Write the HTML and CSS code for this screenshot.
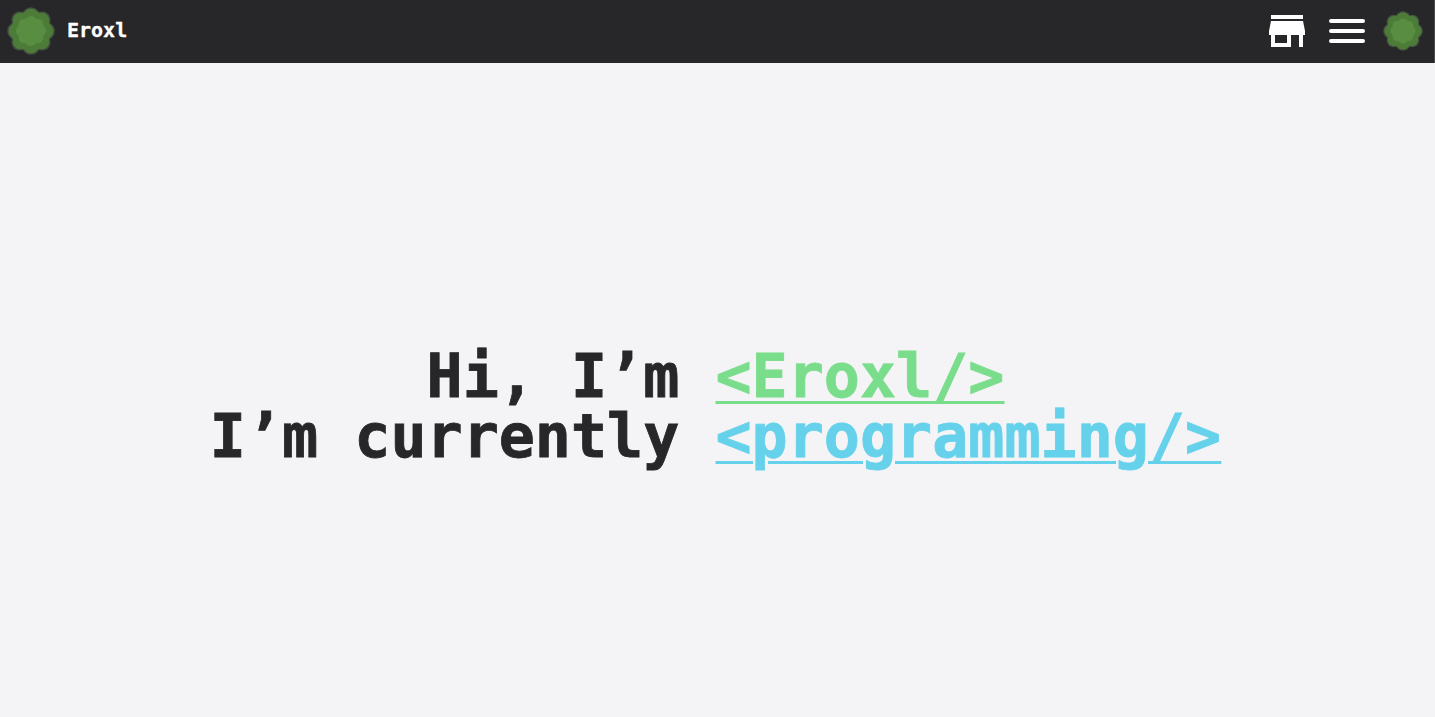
FILE: index.html
```
<!DOCTYPE html>
<html lang="en">
<head>
<meta charset="utf-8">
<title>Eroxl</title>
<link rel="stylesheet" href="styles.css">
</head>
<body>
<svg class="defs" aria-hidden="true">
  <symbol id="bush" viewBox="-24 -24 48 48">
    <g fill="#435140">
      <circle r="21"/><circle cy="-15" r="8.8"/><circle cy="15" r="8.8"/><circle cx="-15" r="8.8"/><circle cx="15" r="8.8"/>
      <circle cx="11.2" cy="-11.2" r="8.4"/><circle cx="11.2" cy="11.2" r="8.4"/><circle cx="-11.2" cy="-11.2" r="8.4"/><circle cx="-11.2" cy="11.2" r="8.4"/>
    </g>
    <g fill="#4d7c38">
      <circle r="19.8"/><circle cy="-14.5" r="7.8"/><circle cy="14.5" r="7.8"/><circle cx="-14.5" r="7.8"/><circle cx="14.5" r="7.8"/>
      <circle cx="10.8" cy="-10.8" r="7.4"/><circle cx="10.8" cy="10.8" r="7.4"/><circle cx="-10.8" cy="-10.8" r="7.4"/><circle cx="-10.8" cy="10.8" r="7.4"/>
    </g>
    <g fill="#588d42">
      <circle r="13.6"/><circle cy="-9.5" r="5.6"/><circle cy="9.5" r="5.6"/><circle cx="-9.5" r="5.6"/><circle cx="9.5" r="5.6"/>
      <circle cx="6.7" cy="-6.7" r="5.6"/><circle cx="6.7" cy="6.7" r="5.6"/><circle cx="-6.7" cy="-6.7" r="5.6"/><circle cx="-6.7" cy="6.7" r="5.6"/>
    </g>
  </symbol>
</svg>
<header class="navbar">
  <a class="brand"><svg class="logo"><use href="#bush"/></svg><span class="title">Eroxl</span></a>
  <nav class="actions">
    <svg class="store" viewBox="0 0 36 32"><path fill="#fff" fill-rule="evenodd" d="M2 0H34V4H2ZM2 6H34L36 16V20H34V32H30V20H22V32H2V20H0V16ZM6 20V28H18V20Z"/></svg>
    <svg class="menu" viewBox="0 0 36 24"><path stroke="#fff" stroke-width="4" stroke-linecap="round" d="M2 2H34M2 12H34M2 22H34"/></svg>
    <svg class="avatar"><use href="#bush"/></svg>
  </nav>
</header>
<main class="hero">
  <h1>Hi, I’m <span class="name">&lt;Eroxl/&gt;</span><br>I’m currently <span class="activity">&lt;programming/&gt;</span></h1>
</main>
</body>
</html>
```
FILE: styles.css
```
body {
  margin: 0;
  min-height: 717px;
  background: #f4f4f6;
  color: #272729;
  font-family: "DejaVu Sans Mono", monospace;
}
.defs { display: none; }
.navbar {
  box-sizing: border-box;
  height: 63px;
  padding: 0 11px 1px 7px;
  border-right: 1px solid #4b4b4d;
  background: #272729;
  color: #fff;
  display: flex;
  align-items: center;
  justify-content: space-between;
}
.brand {
  display: flex;
  align-items: center;
  gap: 12px;
  font-size: 20px;
  font-weight: bold;
}
.title {
  padding-bottom: 2px;
  -webkit-text-stroke: 0.3px currentColor;
}
.logo { width: 48px; height: 48px; }
.actions { display: flex; align-items: center; }
.store { width: 36px; height: 32px; margin-right: 24px; }
.menu { width: 36px; height: 24px; margin-right: 18px; }
.avatar { width: 40px; height: 40px; }
.hero { padding: 283px 4px 0 0; }
h1 {
  margin: 0;
  font-size: 60px;
  line-height: 60px;
  text-align: center;
  -webkit-text-stroke: 0.8px currentColor;
}
.name, .activity {
  text-decoration: underline;
  text-decoration-thickness: 3px;
  text-underline-offset: 4px;
}
.name { color: #7add8b; }
.activity { color: #65d1eb; }
```
